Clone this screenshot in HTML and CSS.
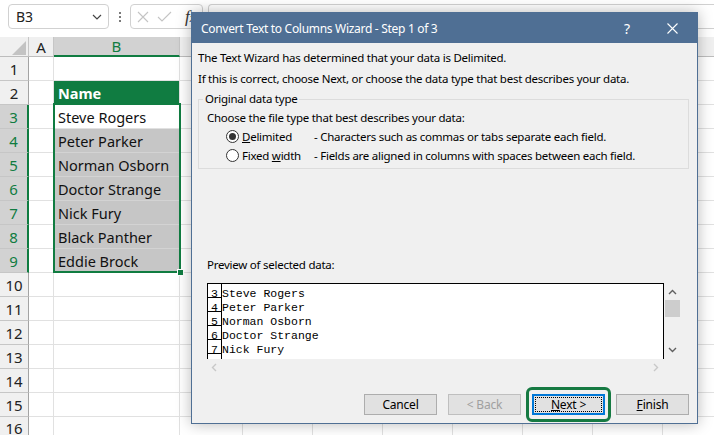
FILE: index.html
```html
<!DOCTYPE html>
<html>
<head>
<meta charset="utf-8">
<link rel="stylesheet" href="styles.css">
</head>
<body>
<div class="app">
  <div class="topbar">
    <div class="namebox"><span>B3</span><svg width="10" height="6" viewBox="0 0 10 6"><path d="M1 1 L5 5 L9 1" fill="none" stroke="#444" stroke-width="1.2"/></svg></div>
    <div class="dots"><i></i><i></i><i></i></div>
    <div class="fbox">
      <svg width="12" height="12" viewBox="0 0 12 12"><path d="M1 1 L11 11 M11 1 L1 11" stroke="#c4c4c4" stroke-width="1.1"/></svg>
      <svg class="chk" width="15" height="11" viewBox="0 0 15 11"><path d="M1 6 L5 10 L14 1" fill="none" stroke="#c4c4c4" stroke-width="1.1"/></svg>
      <span class="fx">f<span>x</span></span>
    </div>
    <div class="formula"></div>
  </div>
  <div class="sheet">
    <div class="row hdr">
      <div class="rh corner"><svg width="14" height="14" viewBox="0 0 14 14"><path d="M14 0 L14 14 L0 14 Z" fill="#c3c3c3"/></svg></div>
      <div class="ca">A</div>
      <div class="cb">B</div>
      <div class="rest"></div>
    </div>
    <div class="row"><div class="rh">1</div><div class="ca"></div><div class="cb"></div><div class="rest"></div></div>
    <div class="row"><div class="rh">2</div><div class="ca"></div><div class="cb head">Name</div><div class="rest"></div></div>
    <div class="row"><div class="rh on">3</div><div class="ca"></div><div class="cb">Steve Rogers</div><div class="rest"></div></div>
    <div class="row"><div class="rh on">4</div><div class="ca"></div><div class="cb selc">Peter Parker</div><div class="rest"></div></div>
    <div class="row"><div class="rh on">5</div><div class="ca"></div><div class="cb selc">Norman Osborn</div><div class="rest"></div></div>
    <div class="row"><div class="rh on">6</div><div class="ca"></div><div class="cb selc">Doctor Strange</div><div class="rest"></div></div>
    <div class="row"><div class="rh on">7</div><div class="ca"></div><div class="cb selc">Nick Fury</div><div class="rest"></div></div>
    <div class="row"><div class="rh on">8</div><div class="ca"></div><div class="cb selc">Black Panther</div><div class="rest"></div></div>
    <div class="row"><div class="rh on">9</div><div class="ca"></div><div class="cb selc">Eddie Brock</div><div class="rest"></div></div>
    <div class="row"><div class="rh">10</div><div class="ca"></div><div class="cb"></div><div class="rest"></div></div>
    <div class="row"><div class="rh">11</div><div class="ca"></div><div class="cb"></div><div class="rest"></div></div>
    <div class="row"><div class="rh">12</div><div class="ca"></div><div class="cb"></div><div class="rest"></div></div>
    <div class="row"><div class="rh">13</div><div class="ca"></div><div class="cb"></div><div class="rest"></div></div>
    <div class="row"><div class="rh">14</div><div class="ca"></div><div class="cb"></div><div class="rest"></div></div>
    <div class="row"><div class="rh">15</div><div class="ca"></div><div class="cb"></div><div class="rest"></div></div>
    <div class="row last"><div class="rh">16</div><div class="ca"></div><div class="cb"></div><div class="rest"></div></div>
  </div>
  <div class="selbox"><span class="handle"></span></div>

  <div class="dialog">
    <div class="titlebar">
      <span class="title">Convert Text to Columns Wizard - Step 1 of 3</span>
      <span class="help">?</span>
      <svg class="close" width="11" height="11" viewBox="0 0 11 11"><path d="M0.5 0.5 L10.5 10.5 M10.5 0.5 L0.5 10.5" stroke="#fff" stroke-width="1.1"/></svg>
    </div>
    <div class="dbody">
      <p class="line">The Text Wizard has determined that your data is Delimited.</p>
      <p class="line">If this is correct, choose Next, or choose the data type that best describes your data.</p>
      <fieldset class="group">
        <legend>Original data type</legend>
        <p class="choose">Choose the file type that best describes your data:</p>
        <div class="opt">
          <svg width="13" height="13" viewBox="0 0 13 13"><circle cx="6.5" cy="6.5" r="6" fill="#fff" stroke="#333"/><circle cx="6.5" cy="6.5" r="3.5" fill="#333"/></svg>
          <span class="olabel"><u>D</u>elimited</span>
          <span class="odesc">- Characters such as commas or tabs separate each field.</span>
        </div>
        <div class="opt">
          <svg width="13" height="13" viewBox="0 0 13 13"><circle cx="6.5" cy="6.5" r="6" fill="#fff" stroke="#333"/></svg>
          <span class="olabel">Fixed <u>w</u>idth</span>
          <span class="odesc">- Fields are aligned in columns with spaces between each field.</span>
        </div>
      </fieldset>
      <p class="plabel">Preview of selected data:</p>
      <div class="preview">
        <div class="pbox">
          <div class="prow"><span class="pnum">3</span><span class="ptext">Steve Rogers</span></div>
          <div class="prow"><span class="pnum">4</span><span class="ptext">Peter Parker</span></div>
          <div class="prow"><span class="pnum">5</span><span class="ptext">Norman Osborn</span></div>
          <div class="prow"><span class="pnum">6</span><span class="ptext">Doctor Strange</span></div>
          <div class="prow"><span class="pnum">7</span><span class="ptext">Nick Fury</span></div>
          <div class="prow"><span class="pnum"></span></div>
        </div>
        <div class="vscroll">
          <svg width="9" height="6" viewBox="0 0 9 6"><path d="M1 5 L4.5 1.5 L8 5" fill="none" stroke="#606060" stroke-width="1.4"/></svg>
          <span class="thumb"></span>
          <svg class="down" width="9" height="6" viewBox="0 0 9 6"><path d="M1 1 L4.5 4.5 L8 1" fill="none" stroke="#606060" stroke-width="1.4"/></svg>
        </div>
        <div class="hscroll">
          <svg width="6" height="9" viewBox="0 0 6 9"><path d="M5 1 L1.5 4.5 L5 8" fill="none" stroke="#c8c8c8" stroke-width="1.4"/></svg>
          <svg width="6" height="9" viewBox="0 0 6 9"><path d="M1 1 L4.5 4.5 L1 8" fill="none" stroke="#c8c8c8" stroke-width="1.4"/></svg>
        </div>
      </div>
      <div class="buttons">
        <button class="btn">Cancel</button>
        <button class="btn dis">&lt; Back</button>
        <span class="ring"><button class="btn def"><span class="focus"><u>N</u>ext &gt;</span></button></span>
        <button class="btn"><u>F</u>inish</button>
      </div>
    </div>
  </div>
</div>
</body>
</html>
```

FILE: styles.css
```css
* { box-sizing: border-box; margin: 0; padding: 0; }
html, body { width: 714px; height: 435px; overflow: hidden; background: #fff; }
body { font-family: "Noto Sans", "Open Sans", sans-serif; color: #000; }
.app { position: relative; width: 714px; height: 435px; overflow: hidden; background: #fff; }

/* formula bar */
.topbar { height: 37px; display: flex; align-items: flex-start; padding: 4px 0 0 8px; }
.namebox { width: 101px; height: 25px; flex: none; border: 1px solid #d1d1d1; border-radius: 4px; display: flex; align-items: center; justify-content: space-between; padding: 0 6px 0 7px; font-size: 14px; color: #222; }
.dots { width: 21px; height: 25px; flex: none; display: flex; flex-direction: column; align-items: center; justify-content: center; gap: 2px; }
.dots i { display: block; width: 2px; height: 2px; background: #7a7a7a; }
.fbox { width: 73px; height: 25px; flex: none; border: 1px solid #d1d1d1; border-radius: 4px; display: flex; align-items: center; padding-left: 6px; }
.fbox .chk { margin-left: 8px; }
.fx { margin-left: 13px; font-family: "Liberation Serif", serif; font-style: italic; font-size: 17px; color: #333; }
.fx span { font-size: 12px; }
.formula { flex: 1; height: 25px; margin-left: 5px; border: 1px solid #d1d1d1; border-right: none; border-radius: 4px 0 0 4px; }

/* grid */
.sheet { display: flex; flex-direction: column; }
.row { display: flex; height: 24px; flex: none; }
.row.hdr { height: 20px; }
.rh { width: 29px; flex: none; background: #f0f0f0; border-right: 1px solid #a3a3a3; border-bottom: 1px solid #c6c6c6; display: flex; align-items: center; justify-content: center; font-size: 15px; color: #222; }
.rh.on { background: #d2d2d2; color: #107c41; border-right: 2px solid #107c41; }
.ca { width: 25px; flex: none; border-right: 1px solid #e1e1e1; border-bottom: 1px solid #e1e1e1; }
.cb { width: 126px; flex: none; border-right: 1px solid #e1e1e1; border-bottom: 1px solid #e1e1e1; font-size: 14.5px; color: #111; padding-left: 4px; display: flex; align-items: center; }
.rest { flex: 1; border-bottom: 1px solid #e1e1e1; background-image: repeating-linear-gradient(to right, transparent 0 69px, #e1e1e1 69px 70px); background-position: -7px 0; }
.hdr .rh { border-bottom: 1px solid #bdbdbd; border-right: 1px solid #c6c6c6; align-items: flex-end; justify-content: flex-end; padding: 0 2px 1px 0; }
.hdr .ca, .hdr .cb { background: #f0f0f0; border-right: 1px solid #c6c6c6; border-bottom: 1px solid #bdbdbd; justify-content: center; display: flex; align-items: center; font-size: 15px; color: #222; padding: 0; }
.hdr .cb { background: #d2d2d2; color: #107c41; border-bottom: 2px solid #107c41; }
.hdr .rest { background-color: #f0f0f0; border-bottom: 1px solid #bdbdbd; background-image: repeating-linear-gradient(to right, transparent 0 69px, #c6c6c6 69px 70px); }
.row.last .rh { align-items: flex-start; padding-top: 1px; }
.cb.head { background: #107c41; color: #fff; font-weight: 700; }
.cb.selc { background: #c6c6c6; border-bottom-color: #d3d3d3; }

.selbox { position: absolute; left: 53px; top: 103px; width: 128px; height: 170px; border: 2px solid #107c41; }
.handle { position: absolute; right: -5px; bottom: -5px; width: 7px; height: 7px; background: #107c41; border: 1px solid #fff; }

/* dialog */
.dialog { position: absolute; left: 191px; top: 12px; width: 507px; height: 412px; border: 1px solid #4f6f94; background: #f0f0f0; box-shadow: 0 0 14px rgba(0,0,0,0.28); font-size: 11.5px; letter-spacing: -0.25px; }
.titlebar { height: 30px; background: #4f6f94; color: #fff; display: flex; align-items: center; padding: 0 0 0 9px; }
.title { font-size: 12px; letter-spacing: -0.3px; flex: 1; }
.help { font-size: 14px; width: 14px; margin-right: 29px; }
.close { margin-right: 19px; }
.dbody { padding: 4px 8px 0 6px; }
.line { line-height: 21px; white-space: nowrap; }
.group { margin: 2px 0 0 0; border: 1px solid #dcdcdc; padding: 0 4px 3px 4px; }
.group legend { line-height: 16px; padding: 0 2px; }
.choose { margin-top: 2px; line-height: 18px; padding-left: 4px; }
.opt { height: 19px; display: flex; align-items: center; padding-left: 23px; white-space: nowrap; }
.olabel { width: 72px; margin-left: 3px; }
.plabel { margin-top: 86px; padding-left: 9px; line-height: 20px; }
.preview { margin: 8px 0 0 9px; display: grid; grid-template-columns: 457px 17px; grid-template-rows: 76px 17px; }
.pbox { background: #fff; border: 1px solid #000; border-bottom: none; overflow: hidden; font-family: "Liberation Mono", monospace; font-size: 11.5px; letter-spacing: 0; }
.prow { height: 14px; display: flex; }
.pnum { width: 14px; flex: none; border-right: 1px solid #000; border-bottom: 1px solid #000; text-align: center; line-height: 11px; padding-top: 4px; }
.ptext { line-height: 11px; padding-top: 4px; }
.vscroll { display: flex; flex-direction: column; align-items: center; padding-top: 6px; }
.thumb { width: 15px; height: 17px; background: #cdcdcd; margin-top: 5px; }
.vscroll .down { margin-top: auto; margin-bottom: 6px; }
.hscroll { grid-column: 1 / 2; display: flex; justify-content: space-between; align-items: center; padding: 0 5px 0 4px; }
.buttons { margin-top: 18px; display: flex; justify-content: flex-end; gap: 11px; }
.btn { width: 73px; height: 21px; background: #e1e1e1; border: 1px solid #adadad; font-family: inherit; font-size: 12px; letter-spacing: -0.2px; color: #000; display: flex; align-items: center; justify-content: center; }
.btn.dis { color: #a0a0a0; border-color: #bfbfbf; }
.ring { position: relative; display: block; }
.ring::after { content: ""; position: absolute; left: -6px; right: -6px; top: -7px; bottom: -7px; border: 3px solid #167a42; border-radius: 6px; }
.btn.def { border: 2px solid #0078d7; padding: 1px; }
.focus { display: flex; align-items: center; justify-content: center; width: 100%; height: 100%; border: 1px dotted #000; }
```
